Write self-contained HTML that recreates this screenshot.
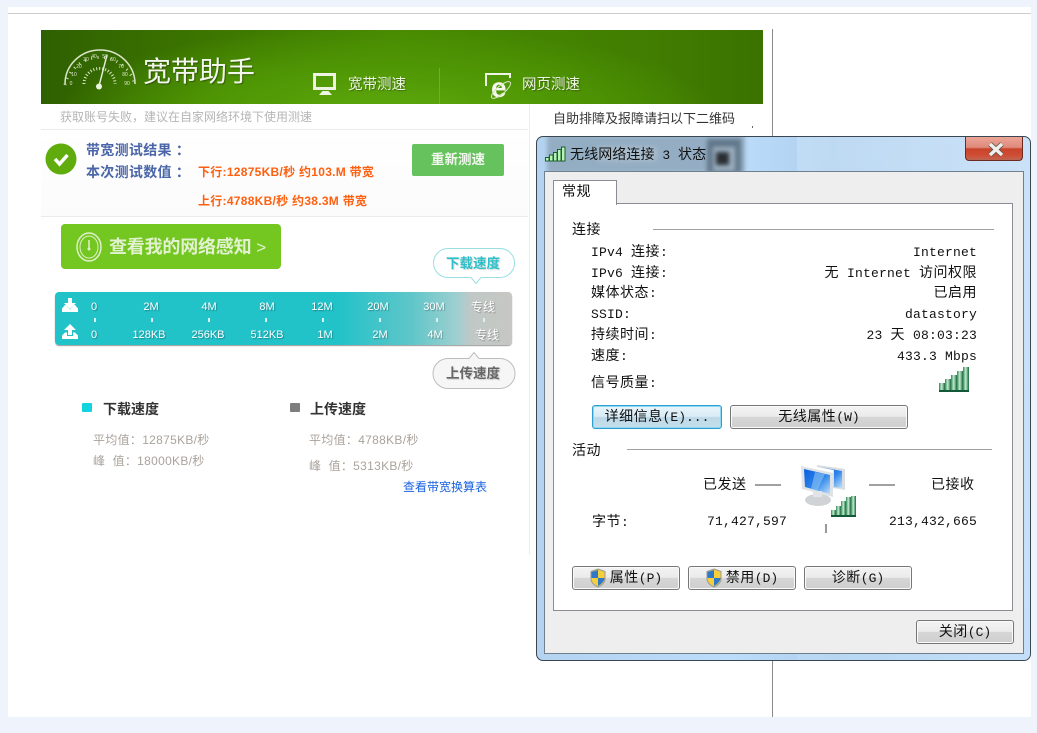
<!DOCTYPE html>
<html><head><meta charset="utf-8">
<style>
*{box-sizing:border-box}
html,body{margin:0;padding:0}
body{width:1037px;height:733px;background:#eff3fb;position:relative;overflow:hidden;font-family:"Liberation Sans","Noto Sans CJK SC",sans-serif}
.a{position:absolute;white-space:nowrap}
.w{font-family:"Liberation Mono","Noto Sans CJK SC",monospace;font-size:13px;color:#111;line-height:16px;letter-spacing:.2px}
i{font-style:normal;font-size:14px;letter-spacing:.5px;line-height:0;font-family:"Noto Sans CJK SC",sans-serif}
.r{text-align:right}
.btn{position:absolute;border:1px solid #777;border-radius:3px;background:linear-gradient(#f3f3f3 0,#ebebeb 48%,#d6d6d6 50%,#cfcfcf 100%);font-family:"Liberation Mono","Noto Sans CJK SC",monospace;font-size:13px;color:#111;text-align:center;line-height:23px;height:24px;white-space:nowrap;box-shadow:inset 0 0 0 1px #fafafa}
.sh{width:108px;padding-left:20px}
.s{font-size:11px;color:#fff;text-shadow:1px 1px 1px rgba(0,0,0,.3);line-height:14px;text-align:center}
.g{font-size:12px;color:#aaa39c;line-height:16px;letter-spacing:.3px}
.t{left:0;width:2px;height:4px;background:#d8f0f0;top:318px}
</style></head><body>
<div class="a" style="left:8px;top:7px;width:1023px;height:710px;background:#fff"></div>
<div class="a" style="left:8px;top:13px;width:1023px;height:1px;background:#ccc"></div>
<div class="a" style="left:772px;top:29px;width:1px;height:688px;background:#8a8a8a"></div>
<div class="a" style="left:529px;top:104px;width:1px;height:451px;background:#eee"></div>

<!-- header -->
<div class="a" style="left:41px;top:30px;width:722px;height:74px;background:radial-gradient(ellipse 330px 90px at 48% 115%,#5ea90d 0,#4f9604 55%,rgba(72,130,2,0) 100%),linear-gradient(90deg,#2f6000 0,#3c7500 22%,#488a02 50%,#417d01 85%,#3b7200 100%)"></div>
<svg class="a" style="left:41px;top:30px" width="722" height="74" viewBox="0 0 722 74">
<g fill="none" stroke-linecap="butt">
<path d="M24 54A35 34 0 0 1 94 54" stroke-width="1.500" stroke="#dbe6c9"/>
<path d="M24 55A36 36 0 0 1 94 55" stroke-width="3" stroke="#cfdcb8" stroke-dasharray="1 5.500"/>
<path d="M43 54A15.500 15.500 0 0 1 74 54" stroke-width="3" stroke="#dfe9cf" stroke-dasharray="1 2"/>
<path d="M58 56L66 25" stroke-width="1.500" stroke="#e4ecd6"/>
</g>
<circle cx="58" cy="56.500" r="3" fill="#edf3e2"/>
<g font-size="5" fill="#dfe9cf" font-family="Liberation Sans" text-anchor="middle">
<text x="30" y="55">0</text><text x="33" y="46">10</text><text x="38" y="38">20</text><text x="45" y="31">30</text><text x="53" y="28">40</text><text x="64" y="28">50</text><text x="72" y="31">60</text><text x="80" y="38">70</text><text x="84" y="46">80</text><text x="86" y="55">90</text>
</g>
<rect x="273.500" y="44.500" width="20" height="14" fill="none" stroke="#eef4e4" stroke-width="3"/>
<path d="M278 65h13l-3.500-4h-6z" fill="#eef4e4"/>
<path d="M445 56V44h24v4" fill="none" stroke="#eef4e4" stroke-width="2"/>
<text x="450" y="67" font-family="Liberation Sans" font-weight="bold" font-size="28" fill="#f5f8ee">e</text>
<ellipse cx="460" cy="60" rx="12" ry="4" fill="none" stroke="#d8e6c4" stroke-width="1" transform="rotate(-40 460 60)"/>
<path d="M398.500 38V74" stroke="#6fae2f" stroke-width="1"/>
</svg>
<div class="a" style="left:143px;top:54px;font-size:28px;line-height:36px;color:#f2f6ec;text-shadow:1px 1px 1px rgba(0,0,0,.35)">宽带助手</div>
<div class="a" style="left:348px;top:75px;font-size:14.500px;line-height:20px;color:#eef4e4;text-shadow:1px 1px 1px rgba(0,0,0,.3)">宽带测速</div>
<div class="a" style="left:522px;top:75px;font-size:14.500px;line-height:20px;color:#eef4e4;text-shadow:1px 1px 1px rgba(0,0,0,.3)">网页测速</div>

<div class="a" style="left:60px;top:108px;font-size:12px;line-height:18px;color:#b5b5b5">获取账号失败，建议在自家网络环境下使用测速</div>
<div class="a" style="left:553px;top:110px;font-size:13px;line-height:18px;color:#333">自助排障及报障请扫以下二维码</div>
<div class="a" style="left:752px;top:126px;width:1px;height:2px;background:#666"></div>

<!-- result -->
<div class="a" style="left:41px;top:129px;width:487px;height:88px;background:linear-gradient(#fff,#fbfbfb);border-top:1px solid #ebebeb;border-bottom:1px solid #ebebeb"></div>
<svg class="a" style="left:45px;top:143px" width="32" height="32"><circle cx="16" cy="16" r="15.500" fill="#5fac0c"/><path d="M10 16l4.500 5 8-9" fill="none" stroke="#fff" stroke-width="3.500"/></svg>
<div class="a" style="left:86px;top:141px;font-size:14px;line-height:19px;font-weight:bold;color:#4a66a8;letter-spacing:.3px">带宽测试结果<span style="margin-left:4px">：</span></div>
<div class="a" style="left:86px;top:163px;font-size:14px;line-height:19px;font-weight:bold;color:#4a66a8;letter-spacing:.3px">本次测试数值<span style="margin-left:4px">：</span></div>
<div class="a" style="left:198px;top:163px;font-size:12px;line-height:18px;font-weight:bold;color:#ff6010;letter-spacing:.28px">下行:12875KB/秒 约103.M 带宽</div>
<div class="a" style="left:198px;top:192px;font-size:12px;line-height:18px;font-weight:bold;color:#ff6010;letter-spacing:.28px">上行:4788KB/秒 约38.3M 带宽</div>
<div class="a" style="left:412px;top:144px;width:92px;height:32px;background:#65c25d;border-radius:2px;color:#f4f8f0;font-size:13.500px;font-weight:bold;text-align:center;line-height:32px">重新测速</div>

<div class="a" style="left:61px;top:224px;width:220px;height:45px;background:#74c621;border-radius:4px"></div>
<svg class="a" style="left:75px;top:231px" width="28" height="32"><ellipse cx="14" cy="16" rx="12" ry="14" fill="none" stroke="#dff0c8" stroke-width="1.500"/><ellipse cx="14" cy="16" rx="9" ry="11" fill="none" stroke="#dff0c8" stroke-width="1"/><path d="M14 9v8" stroke="#dff0c8" stroke-width="1.500"/><circle cx="14" cy="18" r="1.500" fill="#dff0c8"/></svg>
<div class="a" style="left:109px;top:234px;font-size:18px;line-height:26px;color:#e2f2d0;font-weight:bold;letter-spacing:-.2px">查看我的网络感知 <span style="font-weight:normal;font-size:17px">&gt;</span></div>

<!-- bubbles -->
<svg class="a" style="left:430px;top:246px" width="90" height="148">
<path d="M18 2.500H70a14.500 14.500 0 0 1 0 29H51l-5 6-5-6H18a14.500 14.500 0 0 1 0-29z" fill="#fff" stroke="#9adfe3"/>
<path d="M39 112.500l5-6 5 6H70a15 15 0 0 1 0 30H18a15 15 0 0 1 0-30z" fill="#f6f6f6" stroke="#bdbdbd"/>
</svg>
<div class="a" style="left:446px;top:255px;font-size:13.500px;line-height:18px;font-weight:bold;color:#2ec0c8;text-shadow:1px 1px 1px rgba(0,0,0,.15)">下载速度</div>
<div class="a" style="left:446px;top:365px;font-size:13.500px;line-height:18px;font-weight:bold;color:#666;text-shadow:1px 1px 1px rgba(0,0,0,.15)">上传速度</div>

<!-- bar -->
<div class="a" style="left:55px;top:292px;width:457px;height:53px;border-radius:4px;background:linear-gradient(90deg,#22c2c9 0,#22c2c9 62%,#5fc6c9 78%,#9fcfd0 88%,#c0c8c6 91%,#c7c7c4 100%);box-shadow:0 1px 1px #999"></div>
<svg class="a" style="left:60px;top:296px" width="30" height="46" fill="#fff">
<path d="M8 2h4v5h4l-6 6-6-6h4z"/>
<path d="M2 16v-3.500L5 9h1l4 4.500L14 9h1l3 3.500V16z"/>
<path d="M10 28l6 6h-4v5H8v-5H4z"/>
<path d="M2 43v-3.500L5 36.500h2V40h6v-3.500h2l3 3V43z"/>
</svg>
<div class="a s" style="left:82px;top:300px;width:24px">0</div>
<div class="a s" style="left:136px;top:300px;width:30px">2M</div>
<div class="a s" style="left:194px;top:300px;width:30px">4M</div>
<div class="a s" style="left:252px;top:300px;width:30px">8M</div>
<div class="a s" style="left:307px;top:300px;width:30px">12M</div>
<div class="a s" style="left:363px;top:300px;width:30px">20M</div>
<div class="a s" style="left:419px;top:300px;width:30px">30M</div>
<div class="a s" style="left:468px;top:300px;width:30px;font-size:12px">专线</div>
<div class="a s" style="left:82px;top:328px;width:24px">0</div>
<div class="a s" style="left:129px;top:328px;width:40px">128KB</div>
<div class="a s" style="left:188px;top:328px;width:40px">256KB</div>
<div class="a s" style="left:247px;top:328px;width:40px">512KB</div>
<div class="a s" style="left:310px;top:328px;width:30px">1M</div>
<div class="a s" style="left:365px;top:328px;width:30px">2M</div>
<div class="a s" style="left:420px;top:328px;width:30px">4M</div>
<div class="a s" style="left:472px;top:328px;width:30px;font-size:12px">专线</div>
<div class="a t" style="left:94px"></div>
<div class="a t" style="left:151px"></div>
<div class="a t" style="left:208px"></div>
<div class="a t" style="left:265px"></div>
<div class="a t" style="left:322px"></div>
<div class="a t" style="left:379px"></div>
<div class="a t" style="left:436px"></div>
<div class="a t" style="left:483px"></div>

<!-- stats -->
<div class="a" style="left:82px;top:403px;width:10px;height:9px;background:#12d4de;border-radius:1px"></div>
<div class="a" style="left:290px;top:403px;width:10px;height:9px;background:#7d7d7d;border-radius:1px"></div>
<div class="a" style="left:103px;top:400px;font-size:14px;line-height:19px;font-weight:bold;color:#333">下载速度</div>
<div class="a" style="left:310px;top:400px;font-size:14px;line-height:19px;font-weight:bold;color:#333">上传速度</div>
<div class="a g" style="left:93px;top:432px">平均值：12875KB/秒</div>
<div class="a g" style="left:93px;top:453px">峰&nbsp;&nbsp;值：18000KB/秒</div>
<div class="a g" style="left:309px;top:432px">平均值：4788KB/秒</div>
<div class="a g" style="left:309px;top:458px">峰&nbsp;&nbsp;值：5313KB/秒</div>
<div class="a" style="left:403px;top:479px;font-size:12px;line-height:16px;color:#1a62e0">查看带宽换算表</div>

<!-- window -->
<div class="a" style="left:536px;top:136px;width:495px;height:525px;border:1px solid #3a4650;border-radius:7px;background:linear-gradient(90deg,#b3d3f0,#bcdcfb 40%,#aecfec 60%,#c6e0fa);overflow:hidden">
<div style="position:absolute;left:260px;top:0;width:240px;height:525px;background:linear-gradient(#cfe4f8,#c0def9);opacity:.5"></div>
<div style="position:absolute;left:10px;top:-2px;width:198px;height:38px;background:#8ba3b7;filter:blur(2px);opacity:.8"></div>
<div style="position:absolute;left:60px;top:10px;width:60px;height:14px;background:#a9bccc;filter:blur(3px)"></div>
<div style="position:absolute;left:170px;top:2px;width:34px;height:34px;background:#62778a;filter:blur(2px)"></div>
<div style="position:absolute;left:176px;top:10px;width:22px;height:24px;background:#9cb0c1;filter:blur(2px)"></div>
<div style="position:absolute;left:179px;top:15px;width:13px;height:13px;background:#2a2e33;filter:blur(2px)"></div>
</div>
<div class="a" style="left:965px;top:137px;width:58px;height:24px;border:1px solid #6b2a22;border-top:0;border-radius:0 0 4px 4px;background:linear-gradient(#eca497 0,#df8a7a 45%,#c8432a 52%,#d04e36 80%,#bd6553 100%)"></div>
<svg class="a" style="left:985px;top:141px" width="22" height="18" fill="none"><path d="M5 3L17 14M17 3L5 14" stroke="#5c5450" stroke-width="5"/><path d="M5 3L17 14M17 3L5 14" stroke="#f0eeea" stroke-width="3.500"/></svg>
<svg class="a" style="left:545px;top:146px" width="21" height="16"><g fill="#b4f4b4" stroke="#1f5e30"><rect x=".5" y="11.500" width="3.500" height="3.500"/><rect x="4.500" y="9" width="3.500" height="6"/><rect x="8.500" y="6.500" width="3.500" height="8.500"/><rect x="12.500" y="3.500" width="3.500" height="11.500"/><rect x="16.500" y="1" width="3.500" height="14"/></g></svg>
<div class="a w" style="left:570px;top:147px;line-height:17px;letter-spacing:0"><i style="letter-spacing:.1px">无线网络连接</i> 3 <i style="letter-spacing:.1px">状态</i></div>

<div class="a" style="left:544px;top:171px;width:480px;height:483px;background:#eee;border:1px solid #6f7f8c"></div>
<div class="a" style="left:553px;top:203px;width:460px;height:408px;background:#fff;border:1px solid #8a8e94"></div>
<div class="a" style="left:553px;top:180px;width:64px;height:25px;background:#fff;border:1px solid #8a8e94;border-bottom:0"></div>
<div class="a w" style="left:562px;top:185px"><i>常规</i></div>

<div class="a w" style="left:572px;top:223px"><i>连接</i></div>
<div class="a" style="left:653px;top:229px;width:341px;height:1px;background:#a0a0a0"></div>
<div class="a w" style="left:591px;top:245px">IPv4 <i>连接</i>:</div>
<div class="a w" style="left:591px;top:266px">IPv6 <i>连接</i>:</div>
<div class="a w" style="left:591px;top:286px"><i>媒体状态</i>:</div>
<div class="a w" style="left:591px;top:307px">SSID:</div>
<div class="a w" style="left:591px;top:328px"><i>持续时间</i>:</div>
<div class="a w" style="left:591px;top:349px"><i>速度</i>:</div>
<div class="a w" style="left:591px;top:376px"><i>信号质量</i>:</div>
<div class="a w r" style="right:60px;top:245px">Internet</div>
<div class="a w r" style="right:60px;top:266px"><i>无</i> Internet <i>访问权限</i></div>
<div class="a w r" style="right:60px;top:286px"><i>已启用</i></div>
<div class="a w r" style="right:60px;top:307px">datastory</div>
<div class="a w r" style="right:60px;top:328px">23 <i>天</i> 08:03:23</div>
<div class="a w r" style="right:60px;top:349px">433.3 Mbps</div>
<svg class="a" style="left:938px;top:366px" width="32" height="27"><defs><linearGradient id="b" x1="0" x2="1" y1="0" y2="0"><stop offset="0" stop-color="#2f8a55"/><stop offset=".45" stop-color="#c4ead0"/><stop offset="1" stop-color="#14683a"/></linearGradient></defs><g fill="url(#b)"><rect x="1" y="17" width="6" height="8"/><rect x="7" y="13" width="6" height="12"/><rect x="13" y="9" width="6" height="16"/><rect x="19" y="5" width="6" height="20"/><rect x="25" y="1" width="6" height="24"/></g><rect x="1" y="24" width="30" height="2" fill="#14583a"/></svg>

<div class="btn" style="left:592px;top:405px;width:130px;border-color:#2f9fd0;background:linear-gradient(#eaf5fb,#d8ebf5 48%,#bcd8e8 52%,#c6dfec);box-shadow:0 0 0 1px #8fd8f4 inset"><i>详细信息</i>(E)...</div>
<div class="btn" style="left:730px;top:405px;width:178px"><i>无线属性</i>(W)</div>

<div class="a w" style="left:572px;top:444px"><i>活动</i></div>
<div class="a" style="left:627px;top:449px;width:365px;height:1px;background:#a0a0a0"></div>
<div class="a w" style="left:703px;top:478px"><i>已发送</i></div>
<div class="a" style="left:755px;top:484px;width:26px;height:2px;background:#a0a0a0"></div>
<div class="a" style="left:869px;top:484px;width:26px;height:2px;background:#a0a0a0"></div>
<div class="a w" style="left:931px;top:478px"><i>已接收</i></div>
<svg class="a" style="left:797px;top:462px" width="62" height="62">
<defs><linearGradient id="sc" x1="0" y1="0" x2="1" y2="1"><stop offset="0" stop-color="#0a5fe0"/><stop offset=".55" stop-color="#2f86ea"/><stop offset="1" stop-color="#bfe0fa"/></linearGradient><linearGradient id="sg" x1="0" x2="1" y1="0" y2="0"><stop offset="0" stop-color="#2f8a55"/><stop offset=".45" stop-color="#c4ead0"/><stop offset="1" stop-color="#14683a"/></linearGradient></defs>
<ellipse cx="21" cy="38" rx="13" ry="6" fill="#cfd3d5"/>
<path d="M20 3l28 4v21l-12-2V8l-16-3z" fill="#d8dde1"/><path d="M23 5l22 4v17l-8-1V8z" fill="url(#sc)"/>
<path d="M4 4l32 7v24L5 27z" fill="#dfe3e7"/><path d="M7 7l26 6v19L8 25z" fill="url(#sc)"/><path d="M18 10l10 2-8 17-6-2z" fill="#8cc3f4" opacity=".6"/>
<path d="M16 29h9v6h-9z" fill="#e2e5e7"/>
<g fill="url(#sg)"><rect x="34" y="48" width="5" height="6"/><rect x="39" y="44" width="5" height="10"/><rect x="44" y="39" width="5" height="15"/><rect x="49" y="35" width="5" height="19"/><rect x="54" y="34" width="5" height="20"/></g>
<rect x="34" y="53" width="25" height="2" fill="#14583a"/>
</svg>
<div class="a" style="left:825px;top:524px;width:2px;height:9px;background:#999"></div>
<div class="a w" style="left:592px;top:515px"><i>字节</i>:</div>
<div class="a w" style="left:707px;top:514px">71,427,597</div>
<div class="a w" style="left:889px;top:514px">213,432,665</div>

<div class="btn sh" style="left:572px;top:566px"><i>属性</i>(P)</div>
<div class="btn sh" style="left:688px;top:566px"><i>禁用</i>(D)</div>
<div class="btn" style="left:804px;top:566px;width:108px"><i>诊断</i>(G)</div>
<div class="btn" style="left:916px;top:620px;width:98px"><i>关闭</i>(C)</div>
<svg class="a" style="left:589px;top:568px" width="18" height="20"><path d="M9 1l7 2.500V11c0 3.500-3.500 6.500-7 8-3.500-1.500-7-4.500-7-8V3.500z" fill="#f4cf3a" stroke="#9a9a9a"/><path d="M9 2v8H2.500V4zM9 10h6.500c0 3-3 6-6.500 8z" fill="#2f78c8"/></svg>
<svg class="a" style="left:705px;top:568px" width="18" height="20"><path d="M9 1l7 2.500V11c0 3.500-3.500 6.500-7 8-3.500-1.500-7-4.500-7-8V3.500z" fill="#f4cf3a" stroke="#9a9a9a"/><path d="M9 2v8H2.500V4zM9 10h6.500c0 3-3 6-6.500 8z" fill="#2f78c8"/></svg>
</body></html>
